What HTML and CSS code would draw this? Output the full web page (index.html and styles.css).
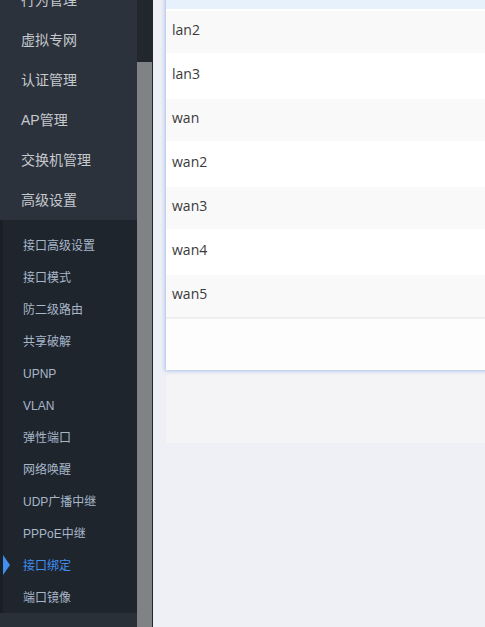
FILE: index.html
```html
<!DOCTYPE html>
<html lang="zh-CN">
<head>
<meta charset="utf-8">
<title>接口绑定</title>
<link rel="stylesheet" href="styles.css">
</head>
<body>
<div class="layout">
  <aside class="sidebar">
    <nav class="menu">
      <div class="menu-inner">
        <div class="menu-item">行为管理</div>
        <div class="menu-item">虚拟专网</div>
        <div class="menu-item">认证管理</div>
        <div class="menu-item">AP管理</div>
        <div class="menu-item">交换机管理</div>
        <div class="menu-item">高级设置</div>
        <div class="submenu">
          <div class="sub-item">接口高级设置</div>
          <div class="sub-item">接口模式</div>
          <div class="sub-item">防二级路由</div>
          <div class="sub-item">共享破解</div>
          <div class="sub-item">UPNP</div>
          <div class="sub-item">VLAN</div>
          <div class="sub-item">弹性端口</div>
          <div class="sub-item">网络唤醒</div>
          <div class="sub-item">UDP广播中继</div>
          <div class="sub-item">PPPoE中继</div>
          <div class="sub-item active">接口绑定</div>
          <div class="sub-item">端口镜像</div>
        </div>
        <div class="menu-rest"></div>
      </div>
    </nav>
    <div class="scrollbar"><div class="thumb"></div></div>
  </aside>
  <main class="main">
    <div class="panel">
      <div class="card">
        <div class="table">
          <div class="row head"></div>
          <div class="row">lan2</div>
          <div class="row">lan3</div>
          <div class="row">wan</div>
          <div class="row">wan2</div>
          <div class="row">wan3</div>
          <div class="row">wan4</div>
          <div class="row">wan5</div>
        </div>
        <div class="card-footer"></div>
      </div>
    </div>
  </main>
</div>
</body>
</html>
```
FILE: styles.css
```css
html, body {
  margin: 0;
  padding: 0;
  height: 627px;
  overflow: hidden;
}
body {
  background: #eff0f5;
  font-family: "Liberation Sans", "Noto Sans CJK SC", sans-serif;
}
.layout {
  display: flex;
  height: 627px;
}
.sidebar {
  width: 153px;
  flex: none;
  display: flex;
  border-right: 1px solid #1d2937;
  box-sizing: border-box;
}
.menu {
  width: 137px;
  background: #2c323b;
  overflow: hidden;
}
.menu-inner {
  margin-top: -20px;
}
.menu-item {
  height: 40px;
  line-height: 40px;
  padding-left: 21px;
  font-size: 14px;
  color: #c5c9ce;
  white-space: nowrap;
}
.submenu {
  background: #1f252d;
  border-left: 3px solid #1a1f26;
  padding-top: 9px;
}
.sub-item {
  position: relative;
  height: 32px;
  line-height: 34px;
  padding-left: 20px;
  font-size: 12px;
  color: #a7b7ca;
  white-space: nowrap;
}
.sub-item.active {
  color: #3f8ef0;
}
.sub-item.active::before {
  content: "";
  position: absolute;
  left: 0;
  top: 6px;
  border-left: 7px solid #3f8ef0;
  border-top: 10px solid transparent;
  border-bottom: 10px solid transparent;
}
.menu-rest {
  height: 40px;
  background: #2a3038;
}
.scrollbar {
  width: 15px;
  background: #22272e;
  padding-top: 62px;
  display: flex;
  flex-direction: column;
}
.thumb {
  flex: 1;
  background: #808285;
}
.main {
  flex: 1;
  min-width: 0;
  padding-left: 13px;
  overflow: hidden;
}
.panel {
  width: 420px;
  margin-top: -31px;
  background: #f4f4f6;
  padding-bottom: 73px;
}
.card {
  background: #ffffff;
  box-shadow: -1px 1px 4px rgba(80, 125, 235, 0.45);
}
.row {
  height: 42px;
  line-height: 38px;
  border-bottom: 2px solid #ffffff;
  padding-left: 6px;
  font-family: "Open Sans", "Noto Sans CJK SC", sans-serif;
  font-size: 14px;
  color: #3a3a3a;
}
.row:nth-child(even) {
  background: #f9f9f9;
}
.row.head {
  height: 40px;
  background: #e6f1fb;
}
.row:last-child {
  border-bottom-color: #efefef;
}
.card-footer {
  height: 51px;
  background: #fdfdfd;
}
```
